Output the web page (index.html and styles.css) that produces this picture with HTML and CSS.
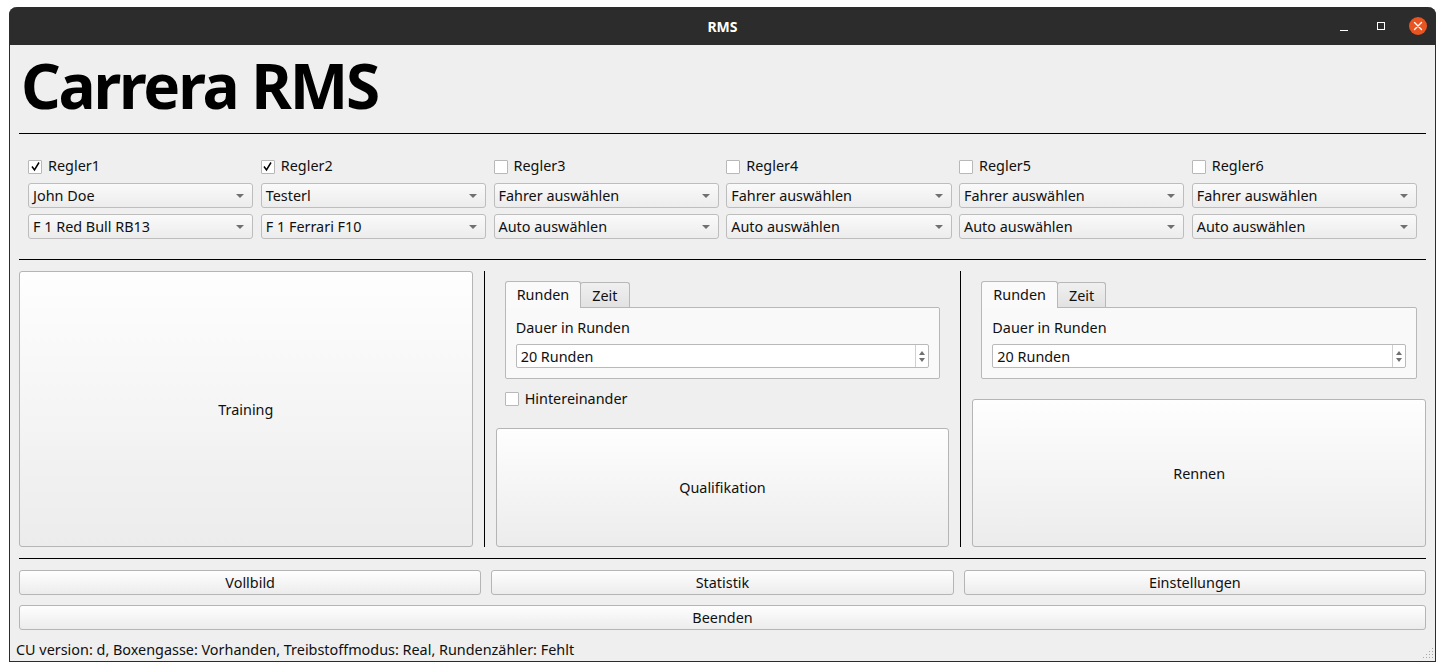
FILE: index.html
```html
<!DOCTYPE html>
<html lang="de">
<head>
<meta charset="utf-8">
<title>RMS</title>
<link rel="stylesheet" href="styles.css">
</head>
<body>
<div class="window">
  <div class="titlebar">
    <span class="title">RMS</span>
    <div class="wincontrols">
      <span class="wc-min"></span>
      <span class="wc-max"></span>
      <span class="wc-close"><svg width="10" height="10" viewBox="0 0 10 10"><path d="M1.5 1.5 L8.5 8.5 M8.5 1.5 L1.5 8.5" stroke="#fff" stroke-width="1.4" stroke-linecap="round"/></svg></span>
    </div>
  </div>
  <div class="content">
    <h1 class="heading">Carrera RMS</h1>
    <div class="rule"></div>
    <div class="controllers">
      <div class="ctl">
        <label class="check"><span class="box checked"><svg width="11" height="11" viewBox="0 0 11 11"><path d="M2 5.5 L4.5 9 L9 1.5" fill="none" stroke="#000" stroke-width="1.5"/></svg></span>Regler1</label>
        <div class="combo"><span>John Doe</span><i class="arrow"></i></div>
        <div class="combo"><span>F 1 Red Bull RB13</span><i class="arrow"></i></div>
      </div>
      <div class="ctl">
        <label class="check"><span class="box checked"><svg width="11" height="11" viewBox="0 0 11 11"><path d="M2 5.5 L4.5 9 L9 1.5" fill="none" stroke="#000" stroke-width="1.5"/></svg></span>Regler2</label>
        <div class="combo"><span>Testerl</span><i class="arrow"></i></div>
        <div class="combo"><span>F 1 Ferrari F10</span><i class="arrow"></i></div>
      </div>
      <div class="ctl">
        <label class="check"><span class="box"></span>Regler3</label>
        <div class="combo"><span>Fahrer auswählen</span><i class="arrow"></i></div>
        <div class="combo"><span>Auto auswählen</span><i class="arrow"></i></div>
      </div>
      <div class="ctl">
        <label class="check"><span class="box"></span>Regler4</label>
        <div class="combo"><span>Fahrer auswählen</span><i class="arrow"></i></div>
        <div class="combo"><span>Auto auswählen</span><i class="arrow"></i></div>
      </div>
      <div class="ctl">
        <label class="check"><span class="box"></span>Regler5</label>
        <div class="combo"><span>Fahrer auswählen</span><i class="arrow"></i></div>
        <div class="combo"><span>Auto auswählen</span><i class="arrow"></i></div>
      </div>
      <div class="ctl">
        <label class="check"><span class="box"></span>Regler6</label>
        <div class="combo"><span>Fahrer auswählen</span><i class="arrow"></i></div>
        <div class="combo"><span>Auto auswählen</span><i class="arrow"></i></div>
      </div>
    </div>
    <div class="rule"></div>
    <div class="modes">
      <div class="col">
        <button class="btn big">Training</button>
      </div>
      <div class="vline"></div>
      <div class="col">
        <div class="tabs">
          <div class="tabbar"><span class="tab active">Runden</span><span class="tab">Zeit</span></div>
          <div class="pane">
            <div class="plabel">Dauer in Runden</div>
            <div class="spin"><span>20 Runden</span><span class="spinbtns"><i class="up"></i><i class="down"></i></span></div>
          </div>
        </div>
        <label class="check hinter"><span class="box"></span>Hintereinander</label>
        <button class="btn big quali">Qualifikation</button>
      </div>
      <div class="vline"></div>
      <div class="col">
        <div class="tabs">
          <div class="tabbar"><span class="tab active">Runden</span><span class="tab">Zeit</span></div>
          <div class="pane">
            <div class="plabel">Dauer in Runden</div>
            <div class="spin"><span>20 Runden</span><span class="spinbtns"><i class="up"></i><i class="down"></i></span></div>
          </div>
        </div>
        <button class="btn big rennen">Rennen</button>
      </div>
    </div>
    <div class="rule"></div>
    <div class="actions">
      <button class="btn small">Vollbild</button>
      <button class="btn small">Statistik</button>
      <button class="btn small">Einstellungen</button>
    </div>
    <button class="btn small full">Beenden</button>
  </div>
  <div class="statusbar">
    <span>CU version: d, Boxengasse: Vorhanden, Treibstoffmodus: Real, Rundenzähler: Fehlt</span>
    <svg class="grip" width="12" height="12" viewBox="0 0 12 12">
      <g fill="#a8a8a8">
        <rect x="10" y="1" width="1" height="1"/>
        <rect x="7" y="4" width="1" height="1"/><rect x="10" y="4" width="1" height="1"/>
        <rect x="4" y="7" width="1" height="1"/><rect x="7" y="7" width="1" height="1"/><rect x="10" y="7" width="1" height="1"/>
        <rect x="1" y="10" width="1" height="1"/><rect x="4" y="10" width="1" height="1"/><rect x="7" y="10" width="1" height="1"/><rect x="10" y="10" width="1" height="1"/>
      </g>
    </svg>
  </div>
</div>
</body>
</html>
```
FILE: styles.css
```css
* { box-sizing: border-box; }
html, body { margin: 0; padding: 0; background: #ffffff; }
body {
  font-family: "Noto Sans", "Open Sans", "DejaVu Sans", sans-serif;
  font-size: 14.4px;
  color: #101010;
}
.window {
  margin: 7px 0 0 9px;
  width: 1427px;
  height: 655px;
  background: #efefef;
  border: 1px solid #2c2c2c;
  border-top: none;
  border-radius: 8px 8px 0 0;
  display: flex;
  flex-direction: column;
  position: relative;
}
.titlebar {
  height: 38px;
  flex: none;
  margin: 0 -1px;
  background: #2c2c2c;
  border-radius: 8px 8px 0 0;
  display: flex;
  align-items: center;
  justify-content: center;
  position: relative;
}
.title {
  color: #ffffff;
  font-weight: bold;
  font-size: 14px;
}
.wincontrols {
  position: absolute;
  right: 9px;
  top: 10px;
  display: flex;
  align-items: center;
  gap: 0;
}
.wc-min {
  width: 8px; height: 1px; background: #ffffff;
  margin-top: 8px;
  margin-right: 29px;
}
.wc-max {
  width: 8px; height: 8px; border: 1px solid #ffffff;
  margin-right: 24px;
}
.wc-close {
  width: 18px; height: 18px; border-radius: 50%;
  background: #e95420;
  display: flex; align-items: center; justify-content: center;
}
.content {
  flex: 1;
  padding: 0 9px;
  display: flex;
  flex-direction: column;
}
.heading {
  margin: 0 0 8px 2px;
  height: 80px;
  line-height: 80px;
  font-size: 62px;
  font-weight: bold;
  color: #000;
  letter-spacing: -2.2px;
}
.rule {
  height: 1px;
  background: #000;
  flex: none;
}
.controllers {
  display: grid;
  grid-template-columns: repeat(6, 1fr);
  column-gap: 7.5px;
  padding: 22px 9px 20px;
}
.ctl {
  display: flex;
  flex-direction: column;
  gap: 6px;
}
.check {
  display: flex;
  align-items: center;
  height: 20px;
  gap: 6px;
  margin-bottom: 1px;
  padding-bottom: 2px;
}
.box {
  width: 14px; height: 14px;
  background: #ffffff;
  border: 1px solid #b8b8b8;
  border-radius: 1px;
  display: flex; align-items: center; justify-content: center;
  flex: none;
  margin-top: 3px;
}
.combo {
  height: 25px;
  border: 1px solid #bdbdbd;
  border-radius: 3px;
  background: linear-gradient(#fafafa, #ececec);
  display: flex;
  align-items: center;
  justify-content: space-between;
  padding: 0 8px 1px 4px;
}
.arrow {
  width: 0; height: 0;
  border-left: 4px solid transparent;
  border-right: 4px solid transparent;
  border-top: 4px solid #707070;
  margin-top: 1px;
}
.modes {
  display: grid;
  grid-template-columns: 1fr 1px 1fr 1px 1fr;
  column-gap: 11px;
  height: 276px;
  margin: 11px 0;
}
.vline { background: #000; }
.col {
  display: flex;
  flex-direction: column;
  min-width: 0;
}
.btn {
  font-family: inherit;
  font-size: 14.4px;
  color: #101010;
  border: 1px solid #b5b5b5;
  border-radius: 3px;
  background: linear-gradient(#fefefe, #ececec);
  padding: 0;
}
.big { flex: 1; }
.small { height: 25px; padding-bottom: 1px; }
.full { width: 100%; margin-top: 10px; }
.tabs {
  margin: 9px 9px 0;
}
.tabbar {
  display: flex;
  align-items: flex-end;
  height: 27px;
}
.tab {
  height: 25px;
  padding: 0 11px;
  border: 1px solid #b8b8b8;
  border-bottom: none;
  border-radius: 3px 3px 0 0;
  background: linear-gradient(#f0f0f0, #e2e2e2);
  display: flex;
  align-items: center;
  margin-left: -1px;
}
.tab.active {
  height: 27px;
  margin-left: 0;
  margin-bottom: -1px;
  background: #fafafa;
  position: relative;
  z-index: 1;
  padding: 0 11px 1px;
}
.pane {
  height: 72px;
  border: 1px solid #b8b8b8;
  border-radius: 0 2px 2px 2px;
  background: #f9f9f9;
  padding: 10px 10px 0;
}
.plabel {
  height: 20px;
  line-height: 20px;
  margin-bottom: 6px;
}
.spin {
  height: 24px;
  background: #ffffff;
  border: 1px solid #b9b9b9;
  border-radius: 2px;
  display: flex;
  align-items: center;
  justify-content: space-between;
  padding-left: 4px;
}
.spinbtns {
  height: 100%;
  width: 13px;
  border-left: 1px solid #d0d0d0;
  display: flex;
  flex-direction: column;
  align-items: center;
  justify-content: center;
  gap: 3px;
}
.up, .down {
  width: 0; height: 0;
  border-left: 3.5px solid transparent;
  border-right: 3.5px solid transparent;
}
.up { border-bottom: 4px solid #707070; }
.down { border-top: 4px solid #707070; }
.hinter {
  margin: 9px 0 0 9px;
  height: 20px;
  padding-bottom: 0;
}
.hinter .box { margin-top: 1px; }
.quali { margin-top: 20px; }
.rennen { margin-top: 20px; }
.actions {
  display: grid;
  grid-template-columns: 1fr 1fr 1fr;
  column-gap: 10px;
  margin-top: 11px;
}
.statusbar {
  height: 21px;
  flex: none;
  display: flex;
  align-items: center;
  justify-content: space-between;
  padding: 0 1px 1px 6px;
  margin-bottom: 1px;
}
.grip { align-self: flex-end; }
```
